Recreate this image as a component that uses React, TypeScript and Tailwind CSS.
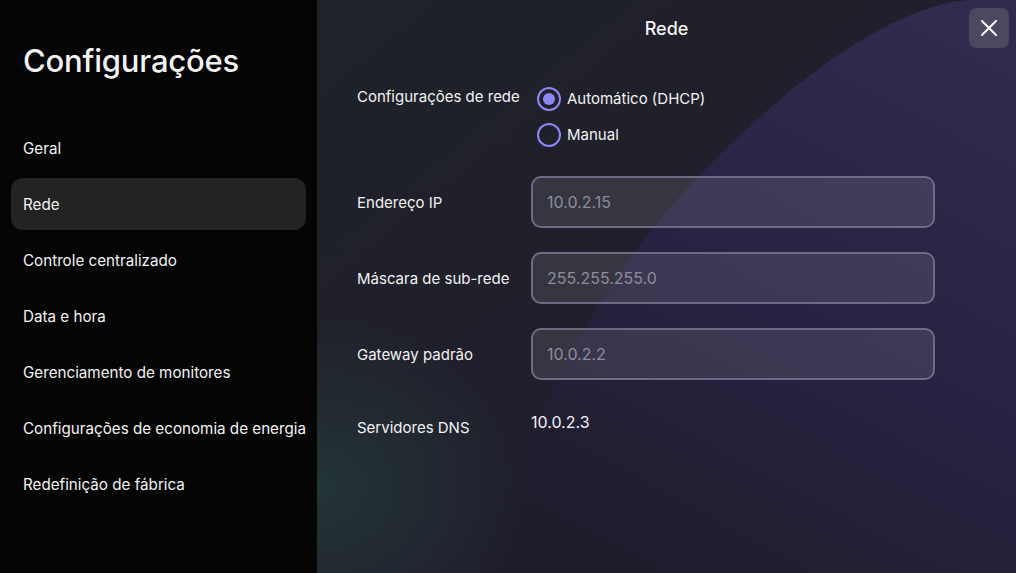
import React, { useState } from 'react';

const menuItems = [
  'Geral',
  'Rede',
  'Controle centralizado',
  'Data e hora',
  'Gerenciamento de monitores',
  'Configurações de economia de energia',
  'Redefinição de fábrica',
];

const fields = [
  { label: 'Endereço IP', value: '10.0.2.15' },
  { label: 'Máscara de sub-rede', value: '255.255.255.0' },
  { label: 'Gateway padrão', value: '10.0.2.2' },
];

const Backdrop: React.FC = () => (
  <svg
    className="absolute inset-0 h-full w-full"
    viewBox="0 0 699 573"
    preserveAspectRatio="none"
    aria-hidden
  >
    <defs>
      <linearGradient id="base" x1="0" y1="0" x2="1" y2="1">
        <stop offset="0" stopColor="#1f2228" />
        <stop offset="0.5" stopColor="#201f2c" />
        <stop offset="1" stopColor="#1e1d29" />
      </linearGradient>
      <linearGradient id="blob" x1="0.8" y1="0" x2="0.3" y2="1">
        <stop offset="0" stopColor="#302c4e" />
        <stop offset="0.55" stopColor="#262241" />
        <stop offset="1" stopColor="#1f1d2c" />
      </linearGradient>
      <radialGradient id="teal" cx="0" cy="0.85" r="0.3">
        <stop offset="0" stopColor="#24393a" stopOpacity="0.8" />
        <stop offset="1" stopColor="#24393a" stopOpacity="0" />
      </radialGradient>
    </defs>
    <rect width="699" height="573" fill="url(#base)" />
    <path
      d="M699 0 L650 0 C560 8 440 110 360 200 C280 290 210 420 160 573 L699 573 Z"
      fill="url(#blob)"
    />
    <rect width="699" height="573" fill="url(#teal)" />
  </svg>
);

export default function App() {
  const [active, setActive] = useState('Rede');
  const [mode, setMode] = useState<'auto' | 'manual'>('auto');

  return (
    <div
      className="flex h-[573px] w-[1016px] overflow-hidden bg-[#050505] text-[#f2f2f2]"
      style={{ fontFamily: 'Inter, "Noto Sans", sans-serif' }}
    >
      <aside className="flex w-[317px] shrink-0 flex-col bg-[#050505]">
        <h1 className="px-[23px] pt-[41px] text-[31px] font-medium leading-[40px] tracking-[-0.2px]">
          Configurações
        </h1>
        <nav className="mt-[41px] flex flex-col gap-1 px-[11px]">
          {menuItems.map((item) => (
            <button
              key={item}
              onClick={() => setActive(item)}
              className={`flex h-[52px] items-center whitespace-nowrap rounded-xl px-3 pt-[2px] text-left text-[15.2px] ${
                active === item ? 'bg-[#232323]' : ''
              }`}
            >
              {item}
            </button>
          ))}
        </nav>
      </aside>

      <main className="relative flex-1 overflow-hidden">
        <Backdrop />
        <div className="relative flex h-full flex-col">
          <div className="flex h-14 items-center justify-center">
            <h2 className="text-[18px] font-medium">Rede</h2>
          </div>
          <button className="absolute right-[7px] top-2 flex h-10 w-10 items-center justify-center rounded-lg bg-[#4b4862]">
            <svg width="20" height="20" viewBox="0 0 20 20" fill="none" stroke="white" strokeWidth="2" strokeLinecap="round">
              <path d="M3 3 L17 17 M17 3 L3 17" />
            </svg>
          </button>

          <div className="flex flex-col pl-10 pr-[81px] pt-[31px]">
            <div className="flex">
              <div className="w-[174px] text-[15px] leading-5">Configurações de rede</div>
              <div className="flex flex-col gap-3 pl-[6px]">
                {[
                  { key: 'auto' as const, label: 'Automático (DHCP)' },
                  { key: 'manual' as const, label: 'Manual' },
                ].map((opt) => (
                  <label key={opt.key} className="flex cursor-pointer items-center gap-[6px] text-[15px]">
                    <span
                      onClick={() => setMode(opt.key)}
                      className="flex h-6 w-6 items-center justify-center rounded-full border-2 border-[#8c87f5]"
                    >
                      {mode === opt.key && <span className="h-3 w-3 rounded-full bg-[#8c87f5]" />}
                    </span>
                    {opt.label}
                  </label>
                ))}
              </div>
            </div>

            <div className="mt-[29px] flex flex-col gap-6">
              {fields.map((f) => (
                <div key={f.label} className="flex items-center">
                  <div className="w-[174px] pt-[2px] text-[15px]">{f.label}</div>
                  <input
                    readOnly
                    placeholder={f.value}
                    className="h-[52px] w-[404px] rounded-[10px] border-2 border-[#6f6b86] bg-white/[0.1] px-[14px] text-[16px] text-[#8e8c9c] outline-none placeholder:text-[#8e8c9c]"
                  />
                </div>
              ))}
            </div>

            <div className="mt-[30px] flex">
              <div className="w-[174px] pt-[7px] text-[15px]">Servidores DNS</div>
              <div className="text-[16px]">10.0.2.3</div>
            </div>
          </div>
        </div>
      </main>
    </div>
  );
}
